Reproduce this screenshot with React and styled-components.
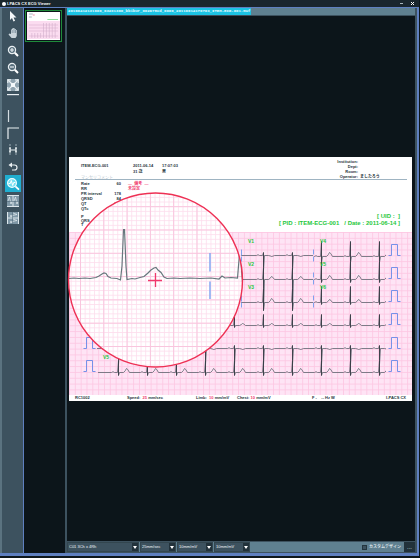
import React from 'react';
import styled, { createGlobalStyle } from 'styled-components';

const slate = '#3d525f';
const slateLight = '#5f8090';
const blue = '#5f80c0';
const black = '#0c151a';
const ink = '#26343c';
const pink = '#f0386c';
const green = '#1fc83c';

const GlobalStyle = createGlobalStyle`
* {
    box-sizing: border-box;
}
body {
    margin: 0;
    background: #0e171c;
    font-family: "Liberation Sans", "Noto Sans CJK JP", sans-serif;
}
`

const Window = styled.div`
display: flex;
flex-direction: column;
min-height: 100vh;
padding: 0 1px 2px 0;
`

const TitleBar = styled.header`
display: flex;
align-items: center;
height: 7px;
padding: 0 2px;
gap: 1px;
background: #1a262d;
color: #f4f8fa;
`

const AppDot = styled.span`
width: 4px;
height: 4px;
border-radius: 50%;
background: #fff;
`

const AppName = styled.h1`
flex: 1;
margin: 0;
font-size: 4px;
line-height: 7px;
font-weight: 700;
`

const WindowButton = styled.button`
display: flex;
width: 10px;
height: 6px;
padding: 0;
border: 0;
background: none;
justify-content: center;
align-items: center;
`

const Frame = styled.div`
flex: 1;
display: flex;
border: solid ${blue};
border-width: 1px 2px 3px 0;
background: ${slate};
`

const Toolbar = styled.nav`
display: flex;
flex-direction: column;
align-items: center;
width: 24px;
border-left: 2px solid #5b7380;
border-right: 1px solid ${blue};
`

const Tool = styled.button`
display: flex;
justify-content: center;
align-items: center;
width: 16px;
height: ${props => props.$short ? '14px' : '17px'};
padding: 0;
border: 0;
background: ${props => props.$active ? '#20aed0' : 'none'};
cursor: pointer;
svg {
    display: block;
}
`

const Thumbnails = styled.aside`
width: 41px;
padding: 2px 1px;
background: ${black};
`

const Thumbnail = styled.button`
display: block;
width: 37px;
height: 32px;
padding: 1px;
border: 1px solid #1f8a3a;
background: ${black};
svg {
    display: block;
    width: 100%;
    height: 100%;
}
`

const Viewer = styled.main`
flex: 1;
display: flex;
flex-direction: column;
min-width: 0;
padding-right: 2px;
border-left: 2px solid ${slate};
background: ${slate};
`

const TabBar = styled.div`
display: flex;
height: 8px;
background: ${slateLight};
border-bottom: 1px solid ${slate};
`

const Tab = styled.button`
height: 7px;
padding: 0 1px;
border: 0;
background: #1cc3e4;
color: #e9fbff;
font: 700 4px/7px "Liberation Mono", monospace;
white-space: nowrap;
`

const Stage = styled.section`
flex: 1;
display: flex;
align-items: center;
padding: 10px 3px 10px 2px;
background: ${black};
`

const Paper = styled.article`
position: relative;
width: 100%;
background: #fff;
color: ${ink};
font-size: 4px;
line-height: 5px;
font-weight: 700;
`

const PaperHeader = styled.div`
display: grid;
grid-template-columns: 52px 29px 1fr 89px;
height: 23px;
margin: 0 5px 0 6px;
padding: 2px 0 0 6px;
border-bottom: 1px solid #9fb4c2;
`

const Patient = styled.div`
padding-top: 4px;
line-height: 6px;
`

const Faint = styled.span`
color: #b8c6ce;
font-weight: 400;
`

const Clinic = styled.dl`
display: grid;
grid-template-columns: 40px 1fr;
column-gap: 2px;
align-content: start;
margin: 0;
line-height: 5px;
dt {
    text-align: right;
}
dd {
    margin: 0;
}
`

const PaperBody = styled.div`
display: flex;
justify-content: space-between;
height: 52px;
padding: 1px 12px 0 12px;
`

const Measures = styled.table`
align-self: start;
border-collapse: collapse;
width: 40px;
td, th {
    padding: 0;
    text-align: left;
    font-weight: 700;
    height: 5px;
    white-space: nowrap;
}
td {
    text-align: right;
}
`

const Axes = styled.tbody`
td, th {
    height: 4px;
    line-height: 4px;
}
td {
    color: #3f74d8;
}
`

const Remarks = styled.div`
flex: 1;
padding-left: 7px;
color: ${pink};
`

const Ident = styled.div`
align-self: start;
padding-top: 32px;
color: ${green};
font-size: 6px;
line-height: 7px;
text-align: right;
white-space: pre;
`

const Chart = styled.svg`
display: block;
width: 100%;
height: auto;
`

const PaperFooter = styled.footer`
display: grid;
grid-template-columns: 52px 69px 41px 75px 1fr auto;
height: 6px;
padding: 0 6px;
line-height: 6px;
em {
    color: ${pink};
    font-style: normal;
}
`

const Lens = styled.svg`
position: absolute;
left: -2px;
top: 34px;
width: 177px;
height: 177px;
`

const StatusBar = styled.footer`
display: flex;
align-items: center;
height: 12px;
gap: 1px;
border: solid ${slate};
border-width: 1px 0;
background: ${slateLight};
color: #eef4f7;
`

const Picker = styled.span`
position: relative;
display: flex;
width: ${props => props.$wide ? '72px' : '36px'};
height: 10px;
background: ${slate};
svg {
    position: absolute;
    right: 1px;
    top: 1px;
    pointer-events: none;
}
`

const Select = styled.select`
appearance: none;
width: 100%;
padding: 0 8px 0 1px;
border: 1px solid #33464f;
border-radius: 0;
background: transparent;
color: inherit;
font: 4px/8px "Liberation Sans", sans-serif;
`

const Option = styled.label`
display: flex;
align-items: center;
gap: 2px;
margin-left: auto;
font-size: 4px;
line-height: 10px;
font-weight: 500;
input {
    appearance: none;
    width: 5px;
    height: 5px;
    margin: 0;
    border: 1px solid #24363f;
    background: ${slate};
}
`

const MoreButton = styled.button`
width: 11px;
height: 10px;
margin-left: 2px;
padding: 0;
border: 0;
background: #22323b;
color: #dfe9ee;
font-size: 6px;
line-height: 6px;
`

const stroke = { fill: 'none', stroke: '#e9eff2', strokeWidth: 1.2 };

const MagnifierIcon = ({ minus }) => (
    <svg width="12" height="12" viewBox="0 0 12 12">
        <circle cx="5" cy="5" r="3.6" fill="#58707e" stroke="#e9eff2" strokeWidth="1.2" />
        <path d="M7.8 7.8L11 11" stroke="#fff" strokeWidth="2" />
        <path d={minus ? 'M3 5h4' : 'M3 5h4M5 3v4'} {...stroke} />
    </svg>
)

const GridIcon = ({ horizontal }) => (
    <svg width="12" height="12" viewBox="0 0 12 12">
        <rect width="12" height="12" fill="#7f97a6" />
        <g transform={horizontal ? 'rotate(90 6 6)' : undefined} fill="none" stroke="#dce6eb">
            <path d="M6 0v12M0 .5h12M0 11.5h12" />
            <path d="M1 6l1.5-4L4 9l1-3M7 6l1.5-4L10 9l1-3" strokeWidth=".8" />
            <path d="M0 6.5h12" stroke="#50697a" strokeWidth=".6" />
        </g>
    </svg>
)

const tools = [
    ['Select', <svg width="12" height="12" viewBox="0 0 12 12"><path d="M3 0v9l2-2 1.5 3.5 1.6-.8L6.5 6.4H9.5z" fill="#f5f8fa" /></svg>],
    ['Pan', <svg width="12" height="12" viewBox="0 0 12 12"><path d="M4 6V1.5h1V.4h1.3V0h1.2v1h1.3v1h1v6L8.5 10H4.6L1.5 6.4l1-.8z" fill="#cad5dc" /><path d="M5.2 2v3M7 1v4M8.5 2v3" stroke="#60788a" strokeWidth=".6" /></svg>],
    ['Zoom in', <MagnifierIcon />],
    ['Zoom out', <MagnifierIcon minus />],
    ['Fit to window', <svg width="12" height="12" viewBox="0 0 12 12"><rect width="12" height="12" fill="#8fa3af" /><path d="M1 1l10 10M11 1L1 11" stroke="#e9eff2" strokeWidth="1.3" /><path d="M.8 4V.8H4M8 .8h3.2V4M11.2 8v3.2H8M4 11.2H.8V8" {...stroke} /><rect x="4" y="4" width="4" height="4" fill="#f4f8fa" /></svg>],
    ['Horizontal caliper', <svg width="12" height="12" viewBox="0 0 12 12"><path d="M0 .6h12" stroke="#e9eff2" strokeWidth="1.2" /></svg>],
    ['Vertical caliper', <svg width="12" height="12" viewBox="0 0 12 12"><path d="M1.5 0v12" stroke="#d4dde2" strokeWidth="1.2" /></svg>],
    ['Corner caliper', <svg width="12" height="12" viewBox="0 0 12 12"><path d="M1 12V1h11" {...stroke} /></svg>],
    ['Interval', <svg width="12" height="12" viewBox="0 0 12 12"><path d="M3 0v11M9 0v11" stroke="#b3c1c9" strokeWidth=".8" strokeDasharray="2 1" /><path d="M2 4h2M2 8h2M8 4h2M8 8h2M3 4v4M9 4v4M3 6h6" {...stroke} /></svg>],
    ['Undo', <svg width="12" height="12" viewBox="0 0 12 12"><path d="M3 4h4.5a2.5 2.5 0 010 5H5" {...stroke} /><path d="M1.5 4L5 1.5v5z" fill="#e9eff2" /></svg>],
    ['Loupe', <svg width="14" height="14" viewBox="0 0 14 14"><circle cx="6" cy="6" r="4.4" fill="#75e0f2" stroke="#f2fdff" strokeWidth="1.2" /><path d="M9.4 9.4L13 12.6" stroke="#fff" strokeWidth="1.8" /><path d="M2.5 6.5h1.8l1-3 1.4 5 1-3h1.6" fill="none" stroke="#fff" /></svg>],
    ['Grid columns', <GridIcon />],
    ['Grid rows', <GridIcon horizontal />],
];

// one heart beat: p wave, qrs at x, t wave
const beat = (x, y, up, down, t) => (
    `L${x - 7} ${y}l1.5 -.8l1.5 .8H${x - 1}L${x} ${y - up}V${y + down}L${x + 1} ${y}H${x + 5}Q${x + 7} ${y - t * .4} ${x + 8} ${y - t}Q${x + 9} ${y - t} ${x + 11} ${y}`
)

const Lead = ({ from, to, y, beats, up, down, t }) => (
    <>
        <path d={`M${from} ${y}${beats.map(x => beat(x, y, up, down, t)).join('')}${to < 386 ? `H${to}` : ''}`} fill="none" stroke="#5d656f" strokeWidth=".8" strokeLinejoin="bevel" />
        <path d={beats.map(x => `M${x} ${y - up}V${y + down}`).join('')} stroke="#30353e" strokeWidth=".8" />
    </>
)

const Pulse = ({ x, y }) => <path d={`M${x} ${y}h3v-11h6v11h3`} fill="none" stroke="#6689e8" strokeWidth=".9" />

const mid = [263.5, 292.5];
const late = [321.5, 350.5, 379.5];
const all = [118.5, 147.5, 176.5, 205.5, 234.5, ...mid, ...late];
const rows = [255.5, 278.5, 301.5, 324.5, 348.5, 371.5];

const Ecg = () => (
    <Chart viewBox="69 232 343 163" role="img" aria-label="ECG">
        <defs>
            <pattern id="paper" width="5.83" height="5.83" patternUnits="userSpaceOnUse" x="69" y="232">
                <rect width="5.83" height="5.83" fill="#fee4f5" />
                <path d="M.5 0V5.83M0 .5H5.83" stroke="#fcc6e2" strokeWidth=".8" />
            </pattern>
            <clipPath id="strip"><rect x="69" y="232" width="317" height="163" /></clipPath>
        </defs>
        <rect x="69" y="232" width="343" height="163" fill="url(#paper)" />
        <g clipPath="url(#strip)">
            <Lead from={241} to={313} y={255.5} beats={mid} up={3} down={15} t={-1} />
            <Lead from={241} to={313} y={279.5} beats={mid} up={12} down={31} t={3} />
            <Lead from={241} to={313} y={302.5} beats={mid} up={14} down={8} t={4} />
            <Lead from={314} to={386} y={256.5} beats={late} up={15} down={6} t={4} />
            <Lead from={314} to={386} y={279.5} beats={late} up={18} down={3} t={4} />
            <Lead from={314} to={386} y={302.5} beats={late} up={16} down={2} t={3} />
            <Lead from={227} to={386} y={325.5} beats={[234.5, ...mid, ...late]} up={11} down={2} t={2} />
            <Lead from={97} to={386} y={348.5} beats={all} up={3} down={16} t={-1} />
            <Lead from={98} to={386} y={372.5} beats={all} up={12} down={3} t={4} />
        </g>
        {rows.map(y => <Pulse key={y} x={388.5} y={y} />)}
        {rows.slice(4).map(y => <Pulse key={y} x={83.5} y={y} />)}
        {rows.slice(0, 3).map(y => (
            <path key={y} d={`M241.5 ${y - 6}v6m0 1v5M313.5 ${y - 6}v5m0 2v5`} stroke="#7fa2ee" />
        ))}
        <g fill={green} fontSize="5" fontWeight="700">
            <text x="248" y="243">V1</text>
            <text x="248" y="266">V2</text>
            <text x="248" y="289">V3</text>
            <text x="320" y="243">V4</text>
            <text x="320" y="266">V5</text>
            <text x="320" y="289">V6</text>
            <text x="103" y="359">V5</text>
        </g>
    </Chart>
)

const Loupe = () => (
    <Lens viewBox="67 191 177 177" role="img" aria-label="Magnified lead">
        <defs>
            <pattern id="fine" width="4.66" height="4.66" patternUnits="userSpaceOnUse" x="80" y="229.5">
                <path d="M.5 0V4.66M0 .5H4.66" stroke="#fddcec" strokeWidth=".8" />
            </pattern>
            <pattern id="coarse" width="23.3" height="23.3" patternUnits="userSpaceOnUse" x="80" y="229.5">
                <path d="M.5 0V23.3M0 .5H23.3" stroke="#f9c6de" />
            </pattern>
            <clipPath id="lens"><circle cx="155.5" cy="280" r="87" /></clipPath>
        </defs>
        <g clipPath="url(#lens)">
            <rect x="67" y="191" width="177" height="177" fill="#fff" />
            <rect x="67" y="191" width="177" height="177" fill="url(#fine)" />
            <rect x="67" y="191" width="177" height="177" fill="url(#coarse)" />
            <path d="M69 278.5l5-.5 5 .5 6-.5 5 .5 6-1 3-1.5 3-2 2-1 2 .5 2 3 3 1.5 6 .5L120.5 280 122 266 123.5 229.5H124.5L126 266 127 279.5 132 278.5 135 279 140 277.5 144 276.5 148 273 151 270 154 268 156 267.5 158 270 161 272.5 164 277 167 278.5 174 278 180 278.5 190 278 200 278.5 211 278 219 279 222 276 225 278 231 277.5 237.5 278 238.5 266 239.5 254 240.5 252 241.5 270 242.5 282" fill="none" stroke="#67777d" strokeWidth="1.2" />
            <path d="M210 253v18.5M210 281.5V299" stroke="#8babf2" strokeWidth="1.6" />
        </g>
        <path d="M148 280.5h14M155.5 273v14" stroke={pink} strokeWidth="1.3" />
        <circle cx="155.5" cy="280" r="87" fill="none" stroke="#ee3054" strokeWidth="1.4" />
    </Lens>
)

const measures = [['Rate', '60'], ['RR', ''], ['PR interval', '178'], ['QRSD', '84'], ['QT', '395'], ['QTc', '']];

const Setting = ({ label, value, wide }) => (
    <Picker $wide={wide}>
        <Select aria-label={label} defaultValue={value}>
            <option>{value}</option>
        </Select>
        <svg width="6" height="8" viewBox="0 0 6 8"><rect width="6" height="8" fill="#22323b" /><path d="M1 3h4L3 6z" fill="#fff" /></svg>
    </Picker>
)

export default function App() {
    return <Window>
        <GlobalStyle />
        <TitleBar>
            <AppDot />
            <AppName>I-PACS CX ECG Viewer</AppName>
            <WindowButton aria-label="Minimize"><svg width="3" height="3"><rect y="1" width="3" height="1" fill="#a9b6bd" /></svg></WindowButton>
            <WindowButton aria-label="Close"><svg width="3" height="3"><path d="M0 0l3 3M3 0L0 3" stroke="#fff" /></svg></WindowButton>
        </TitleBar>
        <Frame>
            <Toolbar>
                {tools.map(([name, icon]) => (
                    <Tool key={name} aria-label={name} $active={name === 'Loupe'} $short={name === 'Horizontal caliper'}>{icon}</Tool>
                ))}
            </Toolbar>
            <Thumbnails>
                <Thumbnail aria-label="ITEM-ECG-001">
                    <svg viewBox="0 0 34 28" preserveAspectRatio="none">
                        <rect width="34" height="28" fill="#fff" />
                        <rect y="9" width="34" height="18" fill="#fbdcf0" />
                        <path d="M21 7.5h11" stroke="#8fdc9c" />
                        <path d="M2 13h30M2 16h30M2 19h30M2 24h30" stroke="#dcb3cf" strokeWidth=".6" />
                        <path d="M5 21v5M8 21v5M11 21v5M14 21v5M17 11v15M20 11v15M23 11v15M26 11v15M29 11v15" stroke="#d0aecb" strokeWidth=".6" />
                        <path d="M2 2h4M2 5h3" stroke="#a8b4c0" />
                        <path d="M6 3h2" stroke="#f58bab" />
                    </svg>
                </Thumbnail>
            </Thumbnails>
            <Viewer>
                <TabBar>
                    <Tab>20160412131600_032C1300_bbibur_002a78cd_0000_20110614170703_ITEM-ECG-001.mwf</Tab>
                </TabBar>
                <Stage>
                    <Paper>
                        <PaperHeader>
                            <Patient>ITEM-ECG-001<br /><br /><Faint>マンセリコメント</Faint></Patient>
                            <Patient>2011-06-14<br />31 歳</Patient>
                            <Patient>17:07:03<br />男</Patient>
                            <Clinic>
                                <dt>Institution:</dt><dd />
                                <dt>Dept:</dt><dd />
                                <dt>Room:</dt><dd />
                                <dt>Operator:</dt><dd>ましたろう</dd>
                            </Clinic>
                        </PaperHeader>
                        <PaperBody>
                            <Measures>
                                <tbody>
                                    {measures.map(([name, value]) => <tr key={name}><th>{name}</th><td>{value}</td></tr>)}
                                </tbody>
                                <Axes>
                                    <tr><td colSpan="2">------- 人軸</td></tr>
                                    <tr><th>P</th><td /></tr>
                                    <tr><th>QRS</th><td /></tr>
                                    <tr><th>T</th><td /></tr>
                                </Axes>
                            </Measures>
                            <Remarks>―&nbsp; 備考 &nbsp;―<br />未設定</Remarks>
                            <Ident>{'[ UID :  ]\n[ PID : ITEM-ECG-001   / Date : 2011-06-14 ]'}</Ident>
                        </PaperBody>
                        <Ecg />
                        <PaperFooter>
                            <span>RC1002</span>
                            <span>Speed: &nbsp;<em>25</em> mm/sec</span>
                            <span>Limb: &nbsp;<em>10</em> mm/mV</span>
                            <span>Chest: <em>10</em> mm/mV</span>
                            <span>F - &nbsp; &nbsp;-- Hz W</span>
                            <span>I-PACS CX</span>
                        </PaperFooter>
                        <Loupe />
                    </Paper>
                </Stage>
                <StatusBar>
                    <Setting wide label="Layout" value="C01 3Ch x 4Rh" />
                    <Setting label="Speed" value="25mm/sec" />
                    <Setting label="Limb gain" value="10mm/mV" />
                    <Setting label="Chest gain" value="10mm/mV" />
                    <Option><input type="checkbox" />カスタムデザイン</Option>
                    <MoreButton aria-label="More">...</MoreButton>
                </StatusBar>
            </Viewer>
        </Frame>
    </Window>
}
